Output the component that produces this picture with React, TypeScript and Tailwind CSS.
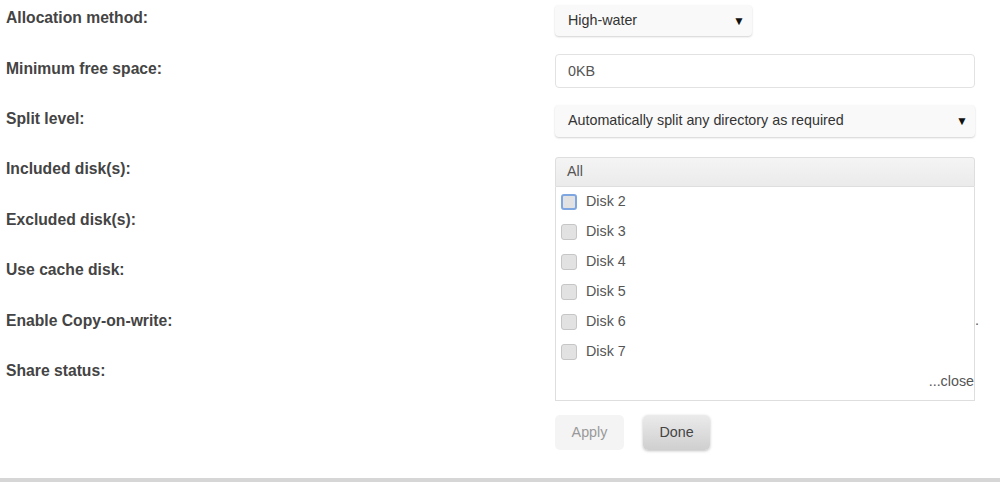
import React from "react";

const labels = [
  "Allocation method:",
  "Minimum free space:",
  "Split level:",
  "Included disk(s):",
  "Excluded disk(s):",
  "Use cache disk:",
  "Enable Copy-on-write:",
  "Share status:",
];

const disks = ["Disk 2", "Disk 3", "Disk 4", "Disk 5", "Disk 6", "Disk 7"];

function Arrow() {
  return <span className="text-[12px] text-[#111]">▼</span>;
}

function Control({ index }: { index: number }) {
  if (index === 0) {
    return (
      <div className="flex h-[31px] w-[197px] items-center justify-between rounded-[4px] bg-[#f9f9f9] pl-[13px] pr-[7px] shadow-[0_1px_2px_rgba(0,0,0,0.18)]">
        <span>High-water</span>
        <Arrow />
      </div>
    );
  }
  if (index === 1) {
    return (
      <div className="mb-[-2px] flex h-[34px] w-[420px] items-center rounded-[4px] border border-[#e2e2e2] bg-white pl-[12px] text-[#555]">
        0KB
      </div>
    );
  }
  if (index === 2) {
    return (
      <div className="flex h-[32px] w-[420px] items-center justify-between rounded-[4px] bg-[#f9f9f9] pl-[13px] pr-[7px] shadow-[0_1px_2px_rgba(0,0,0,0.18)]">
        <span>Automatically split any directory as required</span>
        <Arrow />
      </div>
    );
  }
  if (index === 3) {
    return (
      <div className="relative w-[420px]">
        <div className="flex h-[30px] items-center rounded-t-[3px] border border-[#dedede] bg-gradient-to-b from-[#f4f4f4] to-[#ebebeb] pl-[11px] text-[#555]">
          All
        </div>
        <div className="absolute left-0 top-[30px] z-10 w-[420px] border border-t-0 border-[#dedede] bg-white pb-[3px]">
          {disks.map((d, i) => (
            <div key={d} className="flex h-[30px] items-center pl-[5px]">
              <span
                className={
                  "mr-[9px] inline-block h-[16px] w-[16px] rounded-[3px] bg-[#e2e2e2] " +
                  (i === 0
                    ? "border-2 border-[#7ea6e0]"
                    : "border border-[#c6c6c6]")
                }
              />
              <span className="text-[#555]">{d}</span>
            </div>
          ))}
          <div className="flex h-[30px] items-center justify-end text-[#555]">
            ...close
          </div>
        </div>
      </div>
    );
  }
  if (index === 6) {
    return (
      <div className="flex h-[36px] w-[424px] items-center justify-end text-[#555]">
        .
      </div>
    );
  }
  return null;
}

export default function App() {
  return (
    <div
      className="relative h-[482px] w-[1000px] overflow-hidden bg-white text-[14.3px] text-[#333]"
      style={{ fontFamily: '"Liberation Sans", Arial, sans-serif' }}
    >
      <div className="flex flex-col gap-[14.4px] pl-[6px]">
        {labels.map((l, i) => (
          <div
            key={l}
            className={
              "grid h-[36px] grid-cols-[549px_1fr] " + (i === 3 ? "relative z-10" : "")
            }
          >
            <div className="flex items-center text-[15.7px] font-bold text-[#444]">{l}</div>
            <div className="flex items-end">
              <Control index={i} />
            </div>
          </div>
        ))}
      </div>
      <div className="mt-[26px] flex gap-[19px] pl-[555px]">
        <div className="flex h-[35px] w-[69px] items-center justify-center rounded-[5px] bg-[#f4f4f4] text-[#999]">
          Apply
        </div>
        <div className="flex h-[35px] w-[67px] items-center justify-center rounded-[5px] bg-gradient-to-b from-[#ebebeb] to-[#cfcfcf] text-[#444] shadow-[0_1px_3px_rgba(0,0,0,0.25)]">
          Done
        </div>
      </div>
      <div className="absolute bottom-0 left-0 h-[4px] w-full bg-[#d6d6d6]" />
    </div>
  );
}
